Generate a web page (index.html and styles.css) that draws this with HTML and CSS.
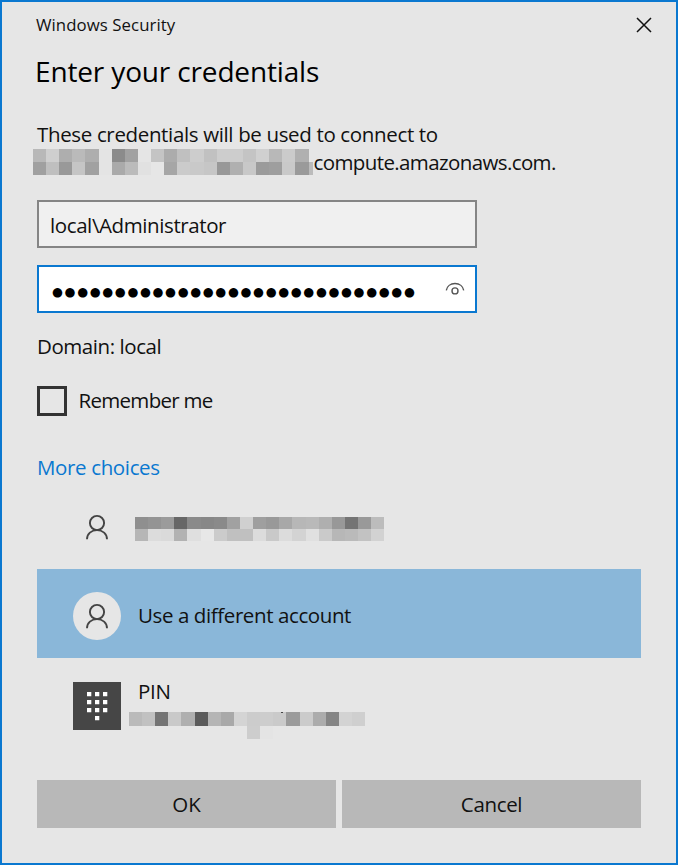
FILE: index.html
```
<!DOCTYPE html>
<html lang="en">
<head>
<meta charset="utf-8">
<title>Windows Security</title>
<link rel="stylesheet" href="styles.css">
</head>
<body>
<main class="dialog">
  <header class="titlebar">
    <span class="caption">Windows Security</span>
    <svg class="close" width="16" height="16" viewBox="0 0 16 16"><path d="M1 1 15 15M15 1 1 15"/></svg>
  </header>
  <h1 class="heading"><span>Enter your credentials</span></h1>
  <div class="message"><span class="fit-message">These credentials will be used to connect to</span></div>
  <div class="host">
    <svg class="mosaic" id="host-mosaic" width="280" height="27"></svg>
    <span class="fit-host">compute.amazonaws.com.</span>
  </div>
  <div class="field"><span class="fit-user">local\Administrator</span></div>
  <div class="field field-active">
    <span class="dots">●●●●●●●●●●●●●●●●●●●●●●●●●●●●●</span>
    <svg class="eye" width="20" height="14" viewBox="0 0 20 14"><path d="M1.3 8.4C1.9 4.4 5.4 1.5 10 1.5s8.1 2.9 8.7 6.9"/><circle cx="10" cy="8.9" r="3"/></svg>
  </div>
  <div class="domain"><span class="fit-domain">Domain: local</span></div>
  <label class="remember"><span class="box"></span><span class="fit-remember">Remember me</span></label>
  <div class="more"><span class="fit-more">More choices</span></div>
  <section class="choices">
    <div class="choice choice-first">
      <span class="tile"><svg class="person" width="24" height="28" viewBox="0 0 24 28"><circle cx="12" cy="9" r="7.1"/><path d="M2 25.2C2 19.7 6.4 16.1 12 16.1S22 19.7 22 25.2"/></svg></span>
      <svg class="mosaic" id="account-mosaic" width="250" height="25"></svg>
    </div>
    <div class="choice choice-selected">
      <span class="tile tile-round"><svg class="person" width="24" height="28" viewBox="0 0 24 28"><circle cx="12" cy="9" r="7.1"/><path d="M2 25.2C2 19.7 6.4 16.1 12 16.1S22 19.7 22 25.2"/></svg></span>
      <span class="choice-label fit-different">Use a different account</span>
    </div>
    <div class="choice choice-pin">
      <span class="tile tile-dark">
        <svg width="22" height="30" viewBox="0 0 22 30" fill="#fff"><path d="M1 1h4.3v4.3H1zM9 1h4.3v4.3H9zM17 1h4.3v4.3H17zM1 9h4.3v4.3H1zM9 9h4.3v4.3H9zM17 9h4.3v4.3H17zM1 17h4.3v4.3H1zM9 17h4.3v4.3H9zM17 17h4.3v4.3H17zM9 25h4.3v4.3H9z"/></svg>
      </span>
      <div class="pin-text">
        <span class="pin-label">PIN</span>
        <svg class="mosaic" id="pin-mosaic" width="238" height="28"></svg>
      </div>
    </div>
  </section>
  <footer class="actions">
    <button class="button"><span>OK</span></button>
    <button class="button"><span class="fit-cancel">Cancel</span></button>
  </footer>
</main>
<script src="mosaic.js"></script>
</body>
</html>
```
FILE: styles.css
```
* { box-sizing: border-box; }
body {
  margin: 0;
  font-family: "Open Sans", "Noto Sans", sans-serif;
  font-size: 20.5px;
  color: #111;
}
.dialog {
  width: 678px;
  height: 865px;
  padding: 0 35px;
  display: flex;
  flex-direction: column;
  background: #e6e6e6;
  border: 2px solid #0a78d0;
}
.dialog span { white-space: nowrap; }
.titlebar {
  height: 46px;
  display: flex;
  align-items: center;
  justify-content: space-between;
}
.caption { margin: -2px 0 0 -1px; font-size: 16.8px; letter-spacing: 0.07px; }
.close { margin-right: -11px; fill: none; stroke: #111; stroke-width: 1.5; }
.heading {
  height: 44px;
  margin: 1px 0 0 -2px;
  font-size: 28px;
  font-weight: 400;
  line-height: 44px;
  letter-spacing: -0.15px;
  color: #000;
}
.message { height: 28px; margin-top: 27px; line-height: 28px; }
.host { height: 28px; display: flex; align-items: center; line-height: 28px; margin-left: -4px; }
.mosaic { display: block; flex: none; }
.fit-message { letter-spacing: -0.35px; }
.fit-host { letter-spacing: -0.61px; margin-left: 0.5px; }
.fit-user { letter-spacing: -0.4px; margin: 2px 0 0 -1px; }
.fit-domain { letter-spacing: -0.44px; }
.fit-remember { letter-spacing: -0.7px; margin: -2px 0 0 -0.5px; }
.fit-more { letter-spacing: -0.36px; }
.fit-different { letter-spacing: -0.4px; }
.fit-cancel { letter-spacing: -0.35px; }
.field {
  width: 440px;
  height: 48px;
  margin-top: 24px;
  padding: 0 12px;
  display: flex;
  align-items: center;
  justify-content: space-between;
  background: #f0f0f0;
  border: 2px solid #858585;
}
.field-active { margin-top: 17px; background: #fff; border-color: #0a78d0; }
.dots { margin: 5px 0 0 1px; font-family: "DejaVu Sans", sans-serif; font-size: 12.5px; letter-spacing: 1.66px; color: #000; }
.eye { margin-right: -2px; fill: none; stroke: #555; stroke-width: 1.4; }
.domain { height: 30px; margin-top: 18px; line-height: 30px; }
.remember { height: 30px; margin-top: 25px; display: flex; align-items: center; gap: 12px; }
.box { width: 30px; height: 30px; border: 3px solid #333; }
.more { height: 30px; margin-top: 36px; line-height: 30px; color: #0a78d0; }
.choices { margin-top: 2px; }
.choice { height: 89px; display: flex; align-items: center; padding-left: 36px; }
.choice-first { height: 85px; }
.choice-first .mosaic { margin: 5px 0 0 14px; }
.choice-first .person { margin-top: 2px; }
.choice-selected { background: #8ab7d9; padding-top: 5px; }
.choice-selected .person { margin-top: 2px; }
.choice-label { margin: -3px 0 0 17px; }
.tile { width: 48px; height: 48px; flex: none; display: flex; align-items: center; justify-content: center; }
.tile-round { border-radius: 50%; background: #e6e6e6; }
.tile-dark { background: #464646; }
.person { fill: none; stroke: #444; stroke-width: 1.9; }
.choice-pin { height: 96px; }
.pin-text { height: 64px; margin-left: 8px; }
.pin-label { display: block; height: 38px; margin-left: 9px; line-height: 34px; letter-spacing: -0.3px; }
.actions { margin-top: 26px; display: grid; grid-template-columns: 299px 299px; gap: 6px; }
.button { height: 48px; padding: 0; border: 0; background: #b8b8b8; color: inherit; font: inherit; }
```
FILE: mosaic.js
```
const cell = 13.12;

function drawMosaic(id, rows, rowHeight, extra = []) {
  const svg = document.getElementById(id);
  const add = (x, y, w, h, tone) => {
    const rect = document.createElementNS("http://www.w3.org/2000/svg", "rect");
    const attrs = { x, y, width: w, height: h, fill: "#" + tone.repeat(3) };
    for (const key in attrs) rect.setAttribute(key, attrs[key]);
    rect.setAttribute("shape-rendering", "crispEdges");
    svg.append(rect);
  };
  rows.forEach((row, r) => row.split(" ").forEach((tone, c) =>
    add(c * cell, r * rowHeight, cell, rowHeight, tone)));
  extra.forEach(item => add(...item));
}

drawMosaic("host-mosaic", [
  "b8 cf ae ba ae e4 8b a1 e5 c4 ac c0 cd c1 cd cd c4 d0 b8 cb b0",
  "a0 bf 99 c5 a1 e4 aa bb e1 e6 a6 cb c9 c6 98 b0 c8 9b 9e c9 9a"
], 13, [[275.5, 13, 4, 13, "bb"]]);
drawMosaic("account-mosaic", [
  "8f 94 9b 67 8a 87 8a a1 d0 9f 99 a8 b7 b9 af 98 74 99 bc",
  "b6 dc da b2 df e7 cb c0 c0 dc c9 dc d3 e0 ca b7 ba c2 d2"
], 12);
drawMosaic("pin-mosaic", [
  "ba c1 74 c9 af 5b b5 a9 d4 cc cd ca 9b cb ac 85 d3 cf"
], 13.5, [[118.1, 13.5, 13.1, 13, "cd"], [131.2, 13.5, 13.1, 13, "e4"], [152, 0, 1.5, 1, "44"]]);
```
